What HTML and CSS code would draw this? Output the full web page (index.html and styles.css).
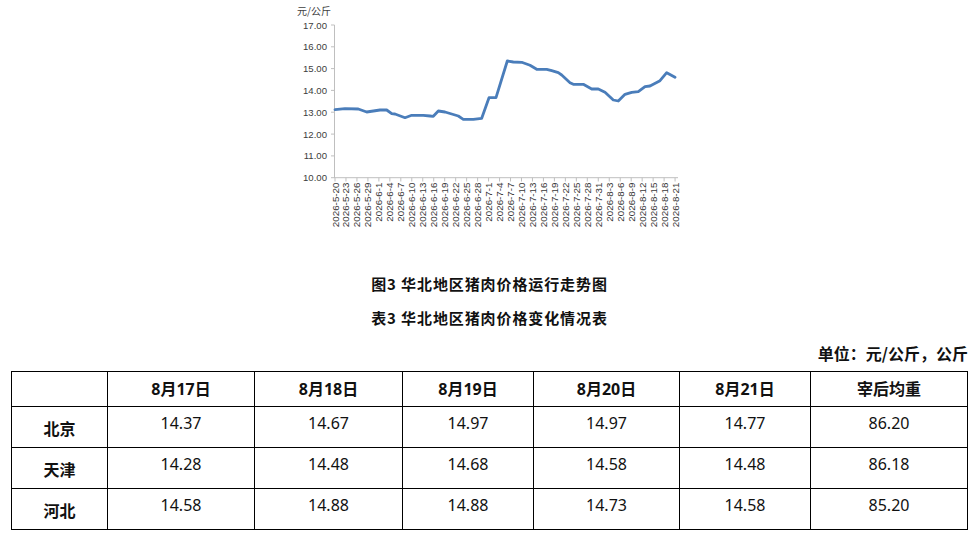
FILE: index.html
```html
<!DOCTYPE html>
<html lang="zh-CN">
<head>
<meta charset="utf-8">
<title>华北地区猪肉价格</title>
<link rel="stylesheet" href="styles.css">
</head>
<body>
<div class="page">
  <svg class="chart" width="400" height="240" viewBox="290 0 400 240" xmlns="http://www.w3.org/2000/svg">
    <text class="unit-label" x="297" y="15">元/公斤</text>
    <g class="ylabels">
      <text x="327" y="28.5">17.00</text>
      <text x="327" y="50.3">16.00</text>
      <text x="327" y="72.1">15.00</text>
      <text x="327" y="93.9">14.00</text>
      <text x="327" y="115.7">13.00</text>
      <text x="327" y="137.6">12.00</text>
      <text x="327" y="159.4">11.00</text>
      <text x="327" y="181.2">10.00</text>
    </g>
    <g class="axis">
      <line x1="334.5" y1="25" x2="334.5" y2="178"/>
      <line x1="334.5" y1="177.7" x2="678" y2="177.7"/>
      <line x1="331" y1="25" x2="334.5" y2="25"/>
      <line x1="331" y1="46.8" x2="334.5" y2="46.8"/>
      <line x1="331" y1="68.6" x2="334.5" y2="68.6"/>
      <line x1="331" y1="90.4" x2="334.5" y2="90.4"/>
      <line x1="331" y1="112.2" x2="334.5" y2="112.2"/>
      <line x1="331" y1="134.1" x2="334.5" y2="134.1"/>
      <line x1="331" y1="155.9" x2="334.5" y2="155.9"/>
      <line x1="331" y1="177.7" x2="334.5" y2="177.7"/>
    </g>
    <g class="axis" id="xticks"></g>
    <g class="xlabels" id="xlabels"></g>
    <polyline class="series" points="335,109.7 345,108.7 358.3,109 366.7,112 380,110 386.7,110 391.7,113.7 395,114 405,117.7 411.7,115.3 423.3,115.3 430,116 433.3,116.3 438.3,111 445,112 455,115 458.3,116 463.3,119.3 473.3,119.3 481.7,118.3 489,97.7 496,97.7 507.3,61 513.3,62 521.7,62.3 530,65.3 536.7,69.3 546.7,69.3 551.7,70.7 558.3,72.7 561.7,75 570,82.7 573.3,84.3 583.3,84.3 591.7,89 598.3,89 605,92.3 613.3,100 618.3,101 625,94.3 631.7,92.3 638.3,91.7 645,86.7 650,86 660,80.7 666.7,72.7 675,77.3"/>
  </svg>

  <div class="caption">图3 华北地区猪肉价格运行走势图</div>
  <div class="caption">表3 华北地区猪肉价格变化情况表</div>
  <div class="unit">单位：元/公斤，公斤</div>

  <table class="price-table">
    <colgroup>
      <col class="c0"><col class="c1"><col class="c2"><col class="c3"><col class="c4"><col class="c5"><col class="c6">
    </colgroup>
    <thead>
      <tr><th></th><th>8月17日</th><th>8月18日</th><th>8月19日</th><th>8月20日</th><th>8月21日</th><th>宰后均重</th></tr>
    </thead>
    <tbody>
      <tr><th>北京</th><td>14.37</td><td>14.67</td><td>14.97</td><td>14.97</td><td>14.77</td><td>86.20</td></tr>
      <tr><th>天津</th><td>14.28</td><td>14.48</td><td>14.68</td><td>14.58</td><td>14.48</td><td>86.18</td></tr>
      <tr><th>河北</th><td>14.58</td><td>14.88</td><td>14.88</td><td>14.73</td><td>14.58</td><td>85.20</td></tr>
    </tbody>
  </table>
</div>
<script>
(function () {
  var labels = ["5-20","5-23","5-26","5-29","6-1","6-4","6-7","6-10","6-13","6-16","6-19","6-22","6-25","6-28","7-1","7-4","7-7","7-10","7-13","7-16","7-19","7-22","7-25","7-28","7-31","8-3","8-6","8-9","8-12","8-15","8-18","8-21"];
  var ns = "http://www.w3.org/2000/svg";
  var lg = document.getElementById("xlabels");
  var tg = document.getElementById("xticks");
  labels.forEach(function (l, k) {
    var x = 335 + k * 10.97;
    var t = document.createElementNS(ns, "text");
    t.setAttribute("transform", "translate(" + (x + 3.5).toFixed(2) + ",182.5) rotate(-90)");
    t.textContent = "2026-" + l;
    lg.appendChild(t);
    var ln = document.createElementNS(ns, "line");
    ln.setAttribute("x1", x.toFixed(2)); ln.setAttribute("x2", x.toFixed(2));
    ln.setAttribute("y1", "177.7"); ln.setAttribute("y2", "181.5");
    tg.appendChild(ln);
  });
})();
</script>
</body>
</html>
```
FILE: styles.css
```css
html, body {
  margin: 0;
  padding: 0;
  background: #fff;
}
body {
  font-family: "Noto Sans", "Noto Sans CJK SC", sans-serif;
  color: #111;
}
.page {
  width: 979px;
}
.chart {
  display: block;
  margin: 0 auto;
}
.unit-label {
  font-family: "Noto Sans CJK SC", sans-serif;
  font-size: 10px;
  fill: #404040;
}
.ylabels text {
  font-family: "Liberation Sans", sans-serif;
  font-size: 9.6px;
  fill: #404040;
  text-anchor: end;
}
.xlabels text {
  font-family: "Liberation Sans", sans-serif;
  font-size: 9.8px;
  fill: #383838;
  text-anchor: end;
}
.axis line {
  stroke: #bfbfbf;
  stroke-width: 1;
}
.series {
  fill: none;
  stroke: #4a7dba;
  stroke-width: 2.8;
  stroke-linejoin: round;
  stroke-linecap: round;
}
.caption {
  font-family: "Noto Sans CJK SC", sans-serif;
  font-weight: bold;
  font-size: 15px;
  letter-spacing: 0.9px;
  line-height: 34px;
  text-align: center;
  color: #111;
}
.caption:first-of-type {
  margin-top: 27px;
}
.unit {
  font-family: "Noto Sans CJK SC", sans-serif;
  font-weight: bold;
  font-size: 16px;
  line-height: 34px;
  text-align: right;
  padding-right: 11px;
  margin-top: 1px;
}
.price-table {
  margin: 1px 0 0 11px;
  border-collapse: collapse;
  table-layout: fixed;
  width: 957px;
  font-size: 16px;
}
.c0 { width: 96px; }
.c1 { width: 147px; }
.c2 { width: 148px; }
.c3 { width: 131px; }
.c4 { width: 146px; }
.c5 { width: 131px; }
.c6 { width: 157px; }
.price-table thead tr { height: 35px; }
.price-table tbody tr { height: 41px; }
.price-table th,
.price-table td {
  border: 1px solid #000;
  text-align: center;
  padding: 0;
  line-height: 22px;
}
.price-table thead th {
  font-weight: bold;
  vertical-align: middle;
}
.price-table tbody th {
  font-family: "Noto Sans CJK SC", sans-serif;
  font-weight: bold;
  vertical-align: middle;
  padding-top: 2px;
}
.price-table tbody td {
  vertical-align: top;
  padding-top: 5px;
  color: #111;
}
```
